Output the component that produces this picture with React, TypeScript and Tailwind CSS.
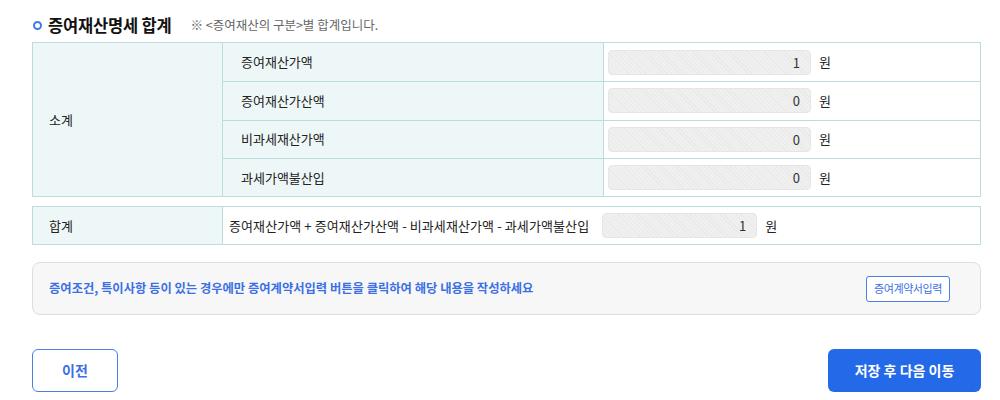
const FONT = "font-['Noto_Sans_CJK_KR','Noto_Sans',sans-serif]";

const SUB_ROWS = [
  { label: "증여재산가액", value: "1" },
  { label: "증여재산가산액", value: "0" },
  { label: "비과세재산가액", value: "0" },
  { label: "과세가액불산입", value: "0" },
];

function AmountBox({ value, width }: { value: string; width: string }) {
  return (
    <div className="flex items-center">
      <div
        className={`${width} h-[25px] rounded-[4px] border border-[#e6e6e6] bg-[repeating-linear-gradient(45deg,#f0f0f0_0px,#f0f0f0_2px,#e9e9e9_2px,#e9e9e9_3px)] pr-[10px] text-right text-[13px] leading-[23px] text-[#333]`}
      >
        {value}
      </div>
      <span className="ml-[8px] text-[13px] text-[#222]">원</span>
    </div>
  );
}

export default function App() {
  return (
    <div className={`${FONT} h-[400px] w-[1000px] bg-white pl-[32px] pr-[19px] text-[#222]`}>
      <div className="flex h-[42px] items-center pt-[8px]">
        <span className="ml-[1px] h-[9px] w-[9px] rounded-full border-[2.5px] border-[#3d7be8]" />
        <h2 className="ml-[6px] text-[16.5px] font-bold tracking-[-0.2px] text-[#111]">증여재산명세 합계</h2>
        <span className="ml-[19px] text-[12.5px] text-[#666]">※ &lt;증여재산의 구분&gt;별 합계입니다.</span>
      </div>

      <div className="grid grid-cols-[189px_381px_1fr] border border-[#bcdcdf] text-[13px]">
        <div className="row-span-4 flex items-center bg-[#eef7f7] pl-[16px]">소계</div>
        {SUB_ROWS.map((r, i) => (
          <div key={r.label} className="contents">
            <div
              className={`flex h-[38.25px] items-center border-l border-[#bcdcdf] bg-[#eef7f7] pl-[18px] ${i > 0 ? "border-t" : ""}`}
            >
              {r.label}
            </div>
            <div
              className={`flex h-[38.25px] items-center border-l border-[#bcdcdf] pl-[4px] ${i > 0 ? "border-t" : ""}`}
            >
              <AmountBox value={r.value} width="w-[203px]" />
            </div>
          </div>
        ))}
      </div>

      <div className="mt-[9px] grid h-[39px] grid-cols-[189px_1fr] border border-[#bcdcdf] text-[13px]">
        <div className="flex items-center bg-[#eef7f7] pl-[16px]">합계</div>
        <div className="flex items-center border-l border-[#bcdcdf] pl-[6px]">
          <span className="mr-[13px] tracking-[0.1px]">증여재산가액 + 증여재산가산액 - 비과세재산가액 - 과세가액불산입</span>
          <AmountBox value="1" width="w-[155px]" />
        </div>
      </div>

      <div className="mt-[17px] flex h-[53px] items-center justify-between rounded-[8px] border border-[#dedede] bg-[#f7f7f7] pl-[16px] pr-[30px]">
        <p className="text-[12.3px] font-semibold text-[#3b6fe6]">
          증여조건, 특이사항 등이 있는 경우에만 증여계약서입력 버튼을 클릭하여 해당 내용을 작성하세요
        </p>
        <button className="h-[26px] w-[84px] rounded-[3px] border border-[#4a7fe6] bg-white text-[11px] tracking-[-0.4px] text-[#3b6fe6]">
          증여계약서입력
        </button>
      </div>

      <div className="mt-[34px] flex items-center justify-between">
        <button className="h-[43px] w-[86px] rounded-[6px] border border-[#4a7fe6] bg-white text-[14px] font-semibold text-[#3b6fe6]">
          이전
        </button>
        <button className="h-[43px] w-[153px] rounded-[6px] bg-[#2469e8] text-[14px] font-semibold text-white">
          저장 후 다음 이동
        </button>
      </div>
    </div>
  );
}
